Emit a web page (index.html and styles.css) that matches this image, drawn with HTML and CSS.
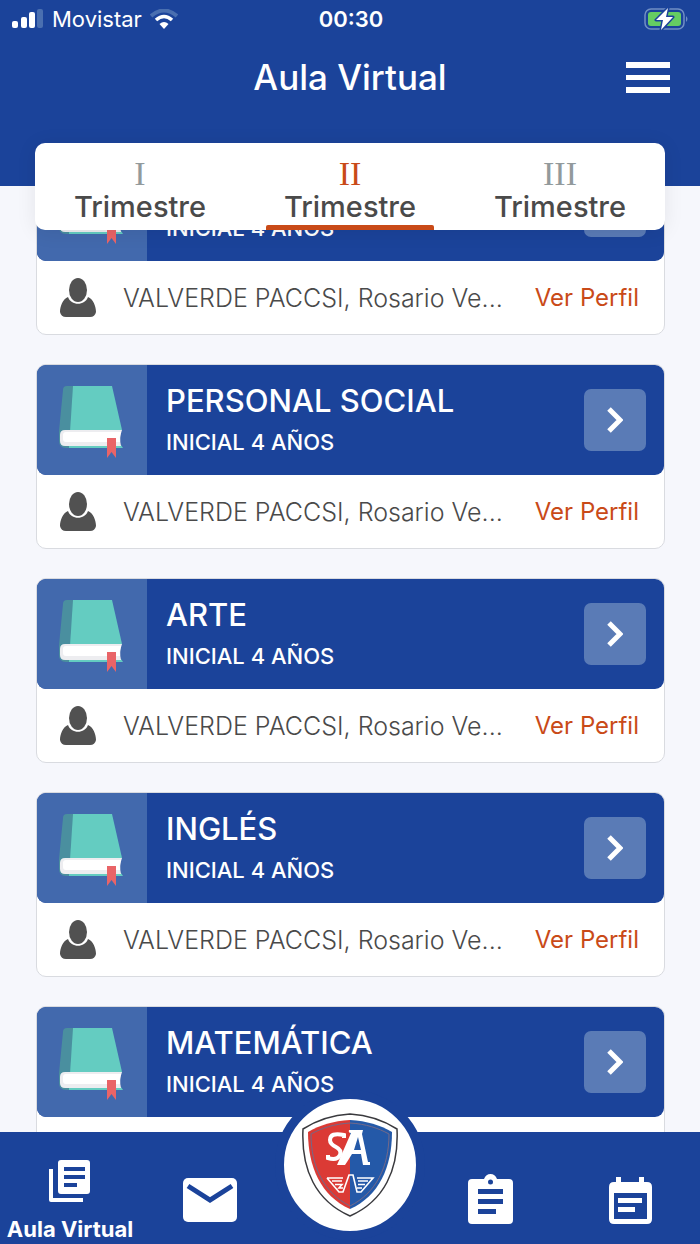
FILE: index.html
```html
<!DOCTYPE html>
<html lang="es">
<head>
<meta charset="utf-8">
<meta name="viewport" content="width=device-width, initial-scale=1">
<title>Aula Virtual</title>
<link rel="stylesheet" href="styles.css">
</head>
<body>
<svg width="0" height="0" class="sprite" aria-hidden="true">
  <symbol id="book" viewBox="0 0 66 74">
    <path d="M4 5Q4 1 8 1H19L15 63H7Q0 63 0 56V46Z" fill="#4a8f9f"/>
    <path d="M14 1H53L63 45L60 47H11Z" fill="#64ccc1"/>
    <path d="M10 60H62L64 63H10Z" fill="#64ccc1"/>
    <path d="M6 45H63Q60 53 62 61H6Q1 61 1 56V50Q1 45 6 45Z" fill="#ededf0"/>
    <path d="M7 47H62Q60 52 61 57H7Q4 57 4 54V50Q4 47 7 47Z" fill="#fff"/>
    <path d="M48 53H57V73L52.500 67L48 73Z" fill="#e96467"/>
  </symbol>
  <symbol id="person" viewBox="0 0 36 40">
    <ellipse cx="18" cy="12" rx="9" ry="12" fill="#515151"/>
    <path d="M8 19C11 28 25 28 28 19C33 21 36 28 36 34Q35 39 30 39H6Q1 39 0 34C0 28 3 21 8 19Z" fill="#515151"/>
  </symbol>
  <symbol id="chevron" viewBox="0 0 16 26">
    <path d="M2 2L13 13L2 24" fill="none" stroke="#fff" stroke-width="5"/>
  </symbol>
</svg>
<div class="app">
  <header class="header">
    <div class="status">
      <div class="carrier">
        <svg width="32" height="20" viewBox="0 0 32 20" fill="#fff"><rect x="0" y="12" width="6" height="7" rx="2"/><rect x="9" y="8" width="6" height="11" rx="2"/><rect x="17" y="3" width="6" height="16" rx="2"/><rect x="25" y="0" width="6" height="19" rx="2" fill="#4a6fb0"/></svg>
        <span>Movistar</span>
        <svg width="28" height="20" viewBox="0 0 28 20" fill="none"><path d="M1 7Q14-4 27 7" stroke="#4a6fb0" stroke-width="4"/><path d="M6 11Q14 4 22 11" stroke="#fff" stroke-width="3.6"/><path d="M9.500 15Q14 11 18.500 15L14 20Z" fill="#fff"/></svg>
      </div>
      <time>00:30</time>
      <svg class="battery" width="46" height="24" viewBox="0 0 46 24"><rect x="1" y="2" width="39" height="20" rx="6" fill="none" stroke="#718fc4" stroke-width="1.500"/><rect x="4" y="5" width="33" height="14" rx="3" fill="#65cd62"/><path d="M42 9Q45 12 42 15Z" fill="#718fc4"/><path d="M24 1L12 13H19L17 23L29 10H22Z" fill="#fff" stroke="#1b439a" stroke-width="3" stroke-linejoin="round" paint-order="stroke"/></svg>
    </div>
    <div class="titlebar">
      <h1>Aula Virtual</h1>
      <button class="menu" type="button" aria-label="Menú"><svg width="44" height="31" viewBox="0 0 44 31" fill="#fff"><path d="M0 0H44V6H0ZM0 13H44V18H0ZM0 25H44V31H0Z"/></svg></button>
    </div>
    <div class="tabs" role="tablist">
      <button class="tab" type="button" role="tab" aria-selected="false"><span class="numeral">I</span><span>Trimestre</span></button>
      <button class="tab active" type="button" role="tab" aria-selected="true"><span class="numeral">II</span><span>Trimestre</span></button>
      <button class="tab" type="button" role="tab" aria-selected="false"><span class="numeral">III</span><span>Trimestre</span></button>
    </div>
  </header>
  <main class="content">
    <div class="courses">
      <article class="card">
        <div class="card-head"><div class="cover"><svg width="66" height="74"><use href="#book"/></svg></div><div class="course level-only"><p>INICIAL 4 AÑOS</p></div><button class="open" type="button" aria-label="Abrir curso"><svg width="16" height="26"><use href="#chevron"/></svg></button></div>
        <div class="teacher"><svg width="36" height="40"><use href="#person"/></svg><span class="name">VALVERDE PACCSI, Rosario Ve...</span><a href="#perfil">Ver Perfil</a></div>
      </article>
      <article class="card">
        <div class="card-head"><div class="cover"><svg width="66" height="74"><use href="#book"/></svg></div><div class="course"><h2>PERSONAL SOCIAL</h2><p>INICIAL 4 AÑOS</p></div><button class="open" type="button" aria-label="Abrir Personal Social"><svg width="16" height="26"><use href="#chevron"/></svg></button></div>
        <div class="teacher"><svg width="36" height="40"><use href="#person"/></svg><span class="name">VALVERDE PACCSI, Rosario Ve...</span><a href="#perfil">Ver Perfil</a></div>
      </article>
      <article class="card">
        <div class="card-head"><div class="cover"><svg width="66" height="74"><use href="#book"/></svg></div><div class="course"><h2>ARTE</h2><p>INICIAL 4 AÑOS</p></div><button class="open" type="button" aria-label="Abrir Arte"><svg width="16" height="26"><use href="#chevron"/></svg></button></div>
        <div class="teacher"><svg width="36" height="40"><use href="#person"/></svg><span class="name">VALVERDE PACCSI, Rosario Ve...</span><a href="#perfil">Ver Perfil</a></div>
      </article>
      <article class="card">
        <div class="card-head"><div class="cover"><svg width="66" height="74"><use href="#book"/></svg></div><div class="course"><h2>INGLÉS</h2><p>INICIAL 4 AÑOS</p></div><button class="open" type="button" aria-label="Abrir Inglés"><svg width="16" height="26"><use href="#chevron"/></svg></button></div>
        <div class="teacher"><svg width="36" height="40"><use href="#person"/></svg><span class="name">VALVERDE PACCSI, Rosario Ve...</span><a href="#perfil">Ver Perfil</a></div>
      </article>
      <article class="card">
        <div class="card-head"><div class="cover"><svg width="66" height="74"><use href="#book"/></svg></div><div class="course"><h2>MATEMÁTICA</h2><p>INICIAL 4 AÑOS</p></div><button class="open" type="button" aria-label="Abrir Matemática"><svg width="16" height="26"><use href="#chevron"/></svg></button></div>
        <div class="teacher"></div>
      </article>
    </div>
  </main>
  <nav class="nav">
    <button class="nav-item current" type="button">
      <svg width="42" height="42" viewBox="0 0 42 42"><path d="M2 9V40H34" fill="none" stroke="#fff" stroke-width="4" stroke-linejoin="round"/><path fill="#fff" fill-rule="evenodd" d="M12 0H38Q41 0 41 3V31Q41 34 38 34H12Q9 34 9 31V3Q9 0 12 0ZM15 7V11H36V7ZM15 15V19H36V15ZM15 23V27H28V23Z"/></svg>
      <span>Aula Virtual</span>
    </button>
    <button class="nav-item" type="button" aria-label="Mensajes"><svg width="54" height="44" viewBox="0 0 54 44"><rect width="54" height="44" rx="5" fill="#fff"/><path d="M5 8L27 22L49 8" fill="none" stroke="#1b439a" stroke-width="5"/></svg></button>
    <button class="nav-item home" type="button" aria-label="Inicio"><span class="badge"><svg width="96" height="104" viewBox="0 0 96 104">
      <path d="M48 1C65 2 81 7 95 16C97 57 82 88 48 103C14 88-1 57 1 16C15 7 31 2 48 1Z" fill="#fff" stroke="#3a3a3e" stroke-width="1.500"/>
      <path d="M48 7C31 8 18 12 6 19C6 54 19 83 48 96Z" fill="#db3a35"/>
      <path d="M48 7C65 8 78 12 90 19C90 54 77 83 48 96Z" fill="#2459a8"/>
      <path d="M48 10C32 11 20 15 9 21C9 54 22 80 48 93C74 80 87 54 87 21C76 15 64 11 48 10Z" fill="none" stroke="#736989" stroke-width="1"/>
      <path d="M35 52L49 20Q46 20 47 17H61L60 21L66 49H68V52H61L59 41H50L45 49L43 52ZM52 37H59L56 24Z" fill="#fff"/>
      <path d="M42 25V22Q28 19 28 27Q28 31 34 34Q40 37 38 42Q35 48 26 45V42" fill="none" stroke="#fff" stroke-width="4"/>
      <path d="M25 65H41M25 65L37 79H41L47 62H51L55 79H59L71 65H55M30 68H40M33 71.500H40L37 75H41M66 68H56M63 71.500H56M60 75H55" fill="none" stroke="#fff" stroke-width="1.600"/>
    </svg></span></button>
    <button class="nav-item tall" type="button" aria-label="Tareas"><svg width="45" height="50" viewBox="0 0 45 50"><path fill="#fff" fill-rule="evenodd" d="M4 5H16Q18 0 22.500 0Q27 0 29 5H41Q45 5 45 9V46Q45 50 41 50H4Q0 50 0 46V9Q0 5 4 5ZM10 15V20H35V15ZM10 25V30H35V25ZM10 35V40H28V35Z"/><circle cx="22.500" cy="8" r="2.500" fill="#1b439a"/></svg></button>
    <button class="nav-item tall" type="button" aria-label="Agenda"><svg width="43" height="47" viewBox="0 0 43 47"><path fill="#fff" fill-rule="evenodd" d="M7 0H12V5H30V0H35V5H38Q43 5 43 10V42Q43 47 38 47H5Q0 47 0 42V10Q0 5 5 5H7ZM5 16V42H38V16Z"/><path fill="#fff" d="M9 21H33V26H9ZM9 30H26V35H9Z"/></svg></button>
  </nav>
</div>
</body>
</html>
```
FILE: styles.css
```css
* {
  box-sizing: border-box;
}

body {
  margin: 0;
  background: #f6f7fc;
  font-family: Inter, "Liberation Sans", sans-serif;
  color: #4a4a4a;
}

button {
  margin: 0;
  padding: 0;
  border: 0;
  background: none;
  font: inherit;
  color: inherit;
}

h1,
h2,
p {
  margin: 0;
}

svg {
  display: block;
  flex: none;
}

.sprite {
  position: absolute;
}

.app {
  display: flex;
  flex-direction: column;
  height: 100vh;
}

/* Header */

.header {
  position: relative;
  z-index: 2;
  flex: none;
  background: #1b439a;
  color: #fff;
}

.status {
  display: grid;
  grid-template-columns: 1fr auto 1fr;
  align-items: center;
  height: 38px;
  padding: 0 10px 0 12px;
  font-size: 22px;
}

.carrier {
  display: flex;
  align-items: center;
  gap: 8px;
}

.status time {
  font-weight: 600;
}

.battery {
  justify-self: end;
}

.titlebar {
  display: grid;
  grid-template-columns: 1fr auto 1fr;
  align-items: center;
  height: 78px;
  padding: 0 30px;
}

.titlebar h1 {
  grid-column: 2;
  font-size: 35px;
  font-weight: 500;
}

.menu {
  justify-self: end;
}

.tabs {
  display: grid;
  grid-template-columns: repeat(3, 1fr);
  margin: 27px 35px -44px;
  border-radius: 10px;
  background: #fff;
  box-shadow: 0 2px 20px rgba(0, 0, 0, 0.08);
}

.tab {
  display: flex;
  flex-direction: column;
  align-items: center;
  height: 87px;
  padding-top: 14px;
  font-size: 29px;
  font-weight: 500;
  line-height: 33px;
  color: #4a4a4a;
}

.tab::after {
  content: "";
  width: 80%;
  height: 5px;
  margin-top: auto;
  border-radius: 2px 2px 0 0;
}

.tab.active::after {
  background: #c94a18;
}

.numeral {
  font-family: "Liberation Serif", serif;
  font-size: 34px;
  font-weight: 400;
  color: #929a9c;
}

.active .numeral {
  color: #c94a18;
}

/* Courses */

.content {
  flex: 1;
  min-height: 0;
  overflow: hidden;
}

.courses {
  display: flex;
  flex-direction: column;
  gap: 29px;
  margin-top: -36px;
  padding: 0 35px 0 36px;
}

.card {
  border: 1px solid #d9dbe0;
  border-radius: 10px;
  background: #fff;
}

.card-head {
  display: flex;
  align-items: center;
  height: 110px;
  padding-right: 18px;
  border-radius: 9px;
  background: #1b439a;
  color: #fff;
  overflow: hidden;
}

.cover {
  display: flex;
  align-items: center;
  justify-content: center;
  align-self: stretch;
  width: 110px;
  padding-top: 4px;
  background: #4269ad;
}

.course {
  flex: 1;
  padding-left: 19px;
}

.level-only {
  padding-top: 44px;
}

.course h2 {
  font-size: 31px;
  font-weight: 500;
  line-height: 44px;
}

.course p {
  font-size: 22px;
  font-weight: 500;
  line-height: 38px;
}

.open {
  display: flex;
  align-items: center;
  justify-content: center;
  width: 62px;
  height: 62px;
  border-radius: 7px;
  background: #5a7bb6;
}

.teacher {
  display: flex;
  align-items: center;
  height: 73px;
  padding: 0 25px 0 23px;
  font-size: 24px;
}

.name {
  flex: 1;
  min-width: 0;
  padding: 0 24px 0 27px;
  overflow: hidden;
  text-overflow: ellipsis;
  white-space: nowrap;
  font-size: 25px;
  font-weight: 300;
}

.teacher a {
  color: #c94a18;
  text-decoration: none;
  white-space: nowrap;
}

/* Bottom navigation */

.nav {
  position: relative;
  z-index: 1;
  display: grid;
  grid-template-columns: repeat(5, minmax(0, 1fr));
  grid-template-rows: 112px;
  flex: none;
  background: #1b439a;
  color: #fff;
}

.nav-item {
  display: flex;
  flex-direction: column;
  align-items: center;
  justify-content: flex-end;
  min-height: 0;
  height: 112px;
  padding-bottom: 22px;
}

.tall {
  padding-bottom: 20px;
}

.current {
  gap: 12px;
  padding-bottom: 0;
  font-size: 22px;
  font-weight: 700;
  line-height: 30px;
  white-space: nowrap;
}

.home {
  padding-bottom: 4px;
}

.badge {
  display: flex;
  align-items: center;
  justify-content: center;
  flex: none;
  width: 150px;
  height: 150px;
  border: 9px solid #1b439a;
  border-radius: 50%;
  background: #fff;
}
```
